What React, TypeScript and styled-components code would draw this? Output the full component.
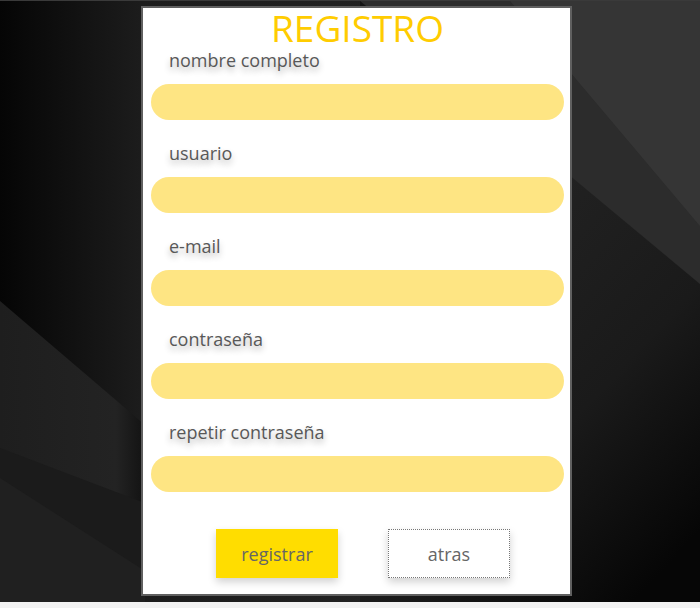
import React from 'react';
import styled, { createGlobalStyle } from 'styled-components';

const wallpaper = `<svg xmlns='http://www.w3.org/2000/svg' width='700' height='602' viewBox='0 0 700 602'>
<defs>
<linearGradient id='base' x1='0' y1='0' x2='1' y2='0'>
<stop offset='0' stop-color='#050505'/>
<stop offset='0.2' stop-color='#1c1c1c'/>
<stop offset='0.8' stop-color='#272727'/>
<stop offset='1' stop-color='#2e2e2e'/>
</linearGradient>
<linearGradient id='low' x1='0.2' y1='0' x2='0.8' y2='1'>
<stop offset='0' stop-color='#141414'/>
<stop offset='0.35' stop-color='#222'/>
<stop offset='0.7' stop-color='#1a1a1a'/>
<stop offset='1' stop-color='#060606'/>
</linearGradient>
<linearGradient id='left' x1='0' y1='0' x2='1' y2='0'>
<stop offset='0' stop-color='#1e1e1e'/>
<stop offset='0.8' stop-color='#232323'/>
<stop offset='1' stop-color='#121212'/>
</linearGradient>
</defs>
<rect width='700' height='602' fill='url(#base)'/>
<polygon points='360,0 510,0 700,225 700,283' fill='#2c2c2c'/>
<polygon points='510,0 700,0 700,225' fill='#353535'/>
<polygon points='360,0 700,283 700,602 360,602' fill='url(#low)'/>
<polygon points='0,300 145,424 145,602 0,602' fill='url(#left)'/>
<polygon points='0,447 145,502 145,602 0,602' fill='#1b1b1b'/>
<polygon points='0,477 145,570 145,602 0,602' fill='#202020'/>
</svg>`;

const GlobalStyle = createGlobalStyle`
  html, body {
    margin: 0;
    padding: 0;
    background: #f2f2f2;
  }
  body {
    font-family: 'Open Sans', 'Liberation Sans', sans-serif;
  }
`;

const Page = styled.div`
  box-sizing: border-box;
  height: 602px;
  padding: 6px 0 0 141px;
  border-top: 1px solid #3a3a3a;
  background: url("data:image/svg+xml,${encodeURIComponent(wallpaper)}") no-repeat 0 0 / 700px 602px;
`;

const Card = styled.form`
  box-sizing: border-box;
  width: 431px;
  height: 590px;
  margin-top: -1px;
  background: #fff;
  border: 2px solid #606060;
  padding: 0 6px 0 8px;
  display: flex;
  flex-direction: column;
`;

const Title = styled.h1`
  margin: 0;
  font-size: 37px;
  line-height: 40px;
  font-weight: 400;
  color: #ffcc00;
  text-align: center;
`;

const Field = styled.div`
  display: flex;
  flex-direction: column;
  margin-bottom: 21px;
`;

const Label = styled.label`
  padding-left: 18px;
  font-size: 18px;
  line-height: 24px;
  color: #585858;
  text-shadow: 0 4px 6px rgba(0, 0, 0, 0.3);
  margin-bottom: 12px;
`;

const Input = styled.input`
  box-sizing: border-box;
  width: 413px;
  height: 36px;
  border: none;
  border-radius: 18px;
  background: #fee583;
  outline: none;
  padding: 0 18px;
  font-family: inherit;
  font-size: 16px;
`;

const Actions = styled.div`
  display: flex;
  gap: 50px;
  padding-left: 65px;
  margin-top: 16px;
`;

const Button = styled.button<{ outlined?: boolean }>`
  box-sizing: border-box;
  width: 122px;
  height: 49px;
  font-family: inherit;
  font-size: 18px;
  color: #666;
  cursor: pointer;
  background: ${(props) => (props.outlined ? '#fff' : '#ffdd00')};
  border: ${(props) => (props.outlined ? '1px dotted #777' : 'none')};
  box-shadow: 0 4px 8px rgba(0, 0, 0, 0.18);
`;

const fields = ['nombre completo', 'usuario', 'e-mail', 'contraseña', 'repetir contraseña'];

export default function App() {
  return (
    <>
      <GlobalStyle />
      <Page>
        <Card onSubmit={(e) => e.preventDefault()}>
          <Title>REGISTRO</Title>
          {fields.map((name, i) => (
            <Field key={i}>
              <Label htmlFor={`f${i}`}>{name}</Label>
              <Input id={`f${i}`} type={name.includes('contraseña') ? 'password' : 'text'} />
            </Field>
          ))}
          <Actions>
            <Button type="submit">registrar</Button>
            <Button type="button" outlined>
              atras
            </Button>
          </Actions>
        </Card>
      </Page>
    </>
  );
}
